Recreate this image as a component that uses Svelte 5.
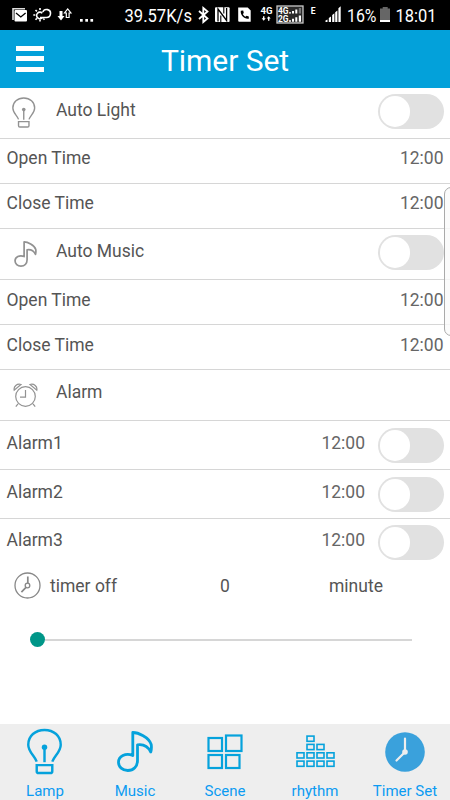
<script>
  const sections = [
    { icon: 'lamp', title: 'Auto Light' },
    { icon: 'music', title: 'Auto Music' }
  ];
  const times = ['Open Time', 'Close Time'];
  const alarms = ['Alarm1', 'Alarm2', 'Alarm3'];
  const tabs = [
    { icon: 'lamp', label: 'Lamp' },
    { icon: 'music', label: 'Music' },
    { icon: 'scene', label: 'Scene' },
    { icon: 'rhythm', label: 'rhythm' },
    { icon: 'timer', label: 'Timer Set' }
  ];
  const bars = [
    [10, 0], [10, 8.3], [20, 8.3],
    [0, 16.7], [10, 16.7], [20, 16.7], [30, 16.7],
    [0, 25], [10, 25], [20, 25], [30, 25]
  ];
</script>

{#snippet lamp(w, h, sw)}
  <svg width={w} height={h} viewBox="0 0 36 47" fill="none" stroke="currentColor" stroke-width={sw}>
    <path d="M10 34C8 28 1.3 24 1.3 16.5C1.3 7.5 8.5 1.3 18 1.3S34.7 7.5 34.7 16.5C34.7 24 28 28 26 34" />
    <path d="M10 37.5h16v6.2a2 2 0 0 1-2 2H12a2 2 0 0 1-2-2z" />
    <path d="M18 19v15.5" />
    <circle cx="18" cy="19" r="2.8" fill="currentColor" stroke="none" />
  </svg>
{/snippet}

{#snippet music(w, h, sw)}
  <svg width={w} height={h} viewBox="0 0 36 41" fill="none" stroke="currentColor" stroke-width={sw} stroke-linejoin="round">
    <path d="M15.8 24.5V1.5C21 1.5 32 6 34.2 13.5Q34.8 17 33.8 21Q29.5 12.5 20.5 13.8V29.5C20.5 35.5 16.5 39.5 10.8 39.5C5.5 39.5 1.5 36 1.5 31.3C1.5 25.8 8.5 21.2 15.8 24.5Z" />
  </svg>
{/snippet}

{#snippet toggle()}
  <span class="switch"><i></i></span>
{/snippet}

<div class="screen">
  <svg class="status" width="450" height="30" viewBox="0 0 450 30" fill="#fff">
    <path d="M13 20V8.7h12" fill="none" stroke="#ddd" stroke-width="1.6" />
    <rect x="14.5" y="10" width="12.5" height="11.5" rx="1" />
    <path d="M16 13l4.8 4 4.8-4" fill="none" stroke="#000" stroke-width="1.3" />
    <g fill="none" stroke="#fff" stroke-width="1.6">
      <path d="M40 17.5h6.5a4 4 0 1 0-3.7-5.5" />
      <path d="M42.5 17.5a3.3 3.3 0 1 1-.2-4.3" />
      <path d="M40 8v2M35.5 10l1.4 1.4M33.3 15h2M35.5 19.8l1.4-1.4M40 19.5v2M43.3 18.5l1.2 1.2" />
    </g>
    <path d="M59.5 11h3v5h2l-3.5 4.5-3.5-4.5h2z" />
    <path d="M66.3 17.5V13H64.5l3.2-4 3.2 4h-1.8v4.5z" fill="none" stroke="#fff" stroke-width="1.2" />
    <rect x="80" y="19" width="2.7" height="2.7" /><rect x="85.3" y="19" width="2.7" height="2.7" /><rect x="90.4" y="19" width="2.7" height="2.7" />
    <text x="124.5" y="21.7" font-size="18.5" textLength="67.5" lengthAdjust="spacingAndGlyphs">39.57K/s</text>
    <path d="M199 11l8.5 7.5-4.2 3.5V8l4.2 3.5L199 19" fill="none" stroke="#fff" stroke-width="1.8" />
    <rect x="215" y="7.3" width="14.6" height="14.7" rx="1" />
    <path d="M218 21.5V9l8.6 11.5V8" fill="none" stroke="#000" stroke-width="1.3" />
    <path d="M220.8 22v-6.5M223.8 7v6.5" fill="none" stroke="#000" stroke-width="1.1" />
    <path d="M238.2 7.5h9.5l3 3v11.3h-11.5a1 1 0 0 1-1-1z" />
    <path d="M240.8 10.8c-.8 4 3.7 8.8 8 7.9v-2.3l-2.3-.7-1 1c-1.3-.6-2.2-1.6-2.7-2.8l1-1-.6-2.4z" fill="#000" />
    <text x="260.5" y="14" font-size="9" font-weight="700" textLength="12" lengthAdjust="spacingAndGlyphs">4G</text>
    <path d="M263 16.2h1.4v2.1h1.3l-2 2.4-2-2.4h1.3zM268 20.7h1.4v-2.1h1.3l-2-2.4-2 2.4h1.3z" />
    <rect x="277" y="6" width="26" height="17" fill="#2a2a2a" stroke="#c8c8c8" stroke-width="1.3" />
    <text x="278" y="13.7" font-size="8.5" font-weight="700" textLength="10.5" lengthAdjust="spacingAndGlyphs">4G</text>
    <text x="278" y="22.2" font-size="8.5" font-weight="700" textLength="10.5" lengthAdjust="spacingAndGlyphs">2G</text>
    <path d="M289 13.6v-1.3h2v1.3zM292 13.6v-2.5h2v2.5zM295.3 13.6V9.5h2v4.1zM289 21.8v-1.6h2v1.6zM292 21.8v-3h2v3zM295.3 21.8v-4.6h2v4.6zM298.8 21.8v-6.2h2.2v6.2z" />
    <path d="M298.8 13.6V8h2.2v5.6z" fill="#777" />
    <text x="310.8" y="13.7" font-size="8.5" font-weight="700">E</text>
    <path d="M325.5 22v-1.5l2-1V22zM328.8 22v-4l2.2-1.4V22zM332.2 22v-7l2.2-1.8V22zM335.2 22v-9.7l2.2-1.8V22zM338.4 22V8.2l2.3-2V22z" />
    <text x="347" y="21.7" font-size="18.5" textLength="29.5" lengthAdjust="spacingAndGlyphs">16%</text>
    <path d="M380 8.5h2.7V7h5v1.5h2.3V20h-10z" fill="#666" />
    <rect x="380" y="20" width="10" height="2" />
    <text x="395.5" y="21.7" font-size="18.5" textLength="41" lengthAdjust="spacingAndGlyphs">18:01</text>
  </svg>

  <header>
    <div class="menu"><i></i><i></i><i></i></div>
    <h1>Timer Set</h1>
  </header>

  <main>
    {#each sections as s}
      <div class="row head">
        <span class="ico {s.icon}">
          {#if s.icon === 'lamp'}{@render lamp(23.5, 31, 2.1)}{:else}{@render music(23, 26, 2.7)}{/if}
        </span>
        <span class="name">{s.title}</span>
        {@render toggle()}
      </div>
      {#each times as t}
        <div class="row time {s.icon}"><span class="name">{t}</span><span class="val">12:00</span></div>
      {/each}
    {/each}
    <div class="row head">
      <span class="ico alarm">
        <svg width="25" height="25" viewBox="0 0 25 25" fill="none" stroke="currentColor" stroke-width="1.2">
          <circle cx="12.5" cy="13.5" r="9.8" />
          <path d="M12.5 7v7.2H7M1.2 7.2C.4 3.5 4 .3 8 1.5zM23.8 7.2c.8-3.7-2.8-6.9-6.8-5.7zM5 20.8l-2.2 2.8M20 20.8l2.2 2.8" />
        </svg>
      </span>
      <span class="name">Alarm</span>
    </div>
    {#each alarms as a}
      <div class="row wake"><span class="name">{a}</span><span class="val">12:00</span>{@render toggle()}</div>
    {/each}

    <div class="off">
      <svg width="27" height="27" viewBox="0 0 27 27" fill="none" stroke="currentColor" stroke-width="1.3">
        <circle cx="13.5" cy="13.5" r="12.5" />
        <circle cx="13.5" cy="13.5" r="2.3" />
        <path d="M13.8 11.2V4.5M12 15.3l-4.6 4.8" stroke-width="1.7" />
      </svg>
      <span class="lbl">timer off</span>
      <span class="num">0</span>
      <span class="unit">minute</span>
    </div>
    <div class="slider"><i></i><b></b></div>
  </main>

  <nav>
    {#each tabs as t}
      <div class="tab">
        <div class="pic {t.icon}">
          {#if t.icon === 'lamp'}
            {@render lamp(35, 47, 2.5)}
          {:else if t.icon === 'music'}
            {@render music(36, 41, 2.8)}
          {:else if t.icon === 'scene'}
            <svg width="36" height="36" viewBox="0 0 36 36" fill="none" stroke="currentColor" stroke-width="2.2">
              <rect x="1.5" y="4" width="13.5" height="13" /><rect x="19" y="1.5" width="15.5" height="15.5" />
              <rect x="1.5" y="21" width="13.5" height="13" /><rect x="19" y="21" width="13.5" height="13" />
            </svg>
          {:else if t.icon === 'rhythm'}
            <svg width="39" height="33" viewBox="0 0 39 33" fill="none" stroke="currentColor" stroke-width="1.6">
              {#each bars as [x, y]}
                <rect x={x + 1} y={y + 1.1} width="7" height="5.2" />
              {/each}
            </svg>
          {:else}
            <svg width="40" height="40" viewBox="0 0 40 40">
              <circle cx="20" cy="20" r="19.8" fill="#3aa1dc" />
              <path d="M20 6.5V20L11.5 28.5" fill="none" stroke="#eee" stroke-width="2.2" stroke-linecap="round" />
              <circle cx="20" cy="20" r="2.8" fill="#eee" />
            </svg>
          {/if}
        </div>
        <span>{t.label}</span>
      </div>
    {/each}
  </nav>
  <div class="edge"></div>
</div>

<style>
  :global(body) { margin: 0; background: #fff; }
  .screen {
    position: relative;
    display: flex;
    flex-direction: column;
    width: 450px;
    height: 800px;
    overflow: hidden;
    background: #fff;
    color: #555;
    font: 17.5px/20px Roboto, sans-serif;
  }
  svg { display: block; flex: none; }
  .status { background: #000; font-family: Roboto, sans-serif; }
  header {
    display: flex;
    height: 58px;
    background: #03a1da;
    color: #fff;
  }
  .menu {
    display: flex;
    flex-direction: column;
    gap: 5.3px;
    width: 28px;
    padding: 16px 0 0 16px;
  }
  .menu i { height: 5px; background: #fff; }
  h1 {
    flex: 1;
    margin: 0 44px 0 -44px;
    padding-left: 44px;
    font-size: 30px;
    line-height: 61px;
    font-weight: 400;
    letter-spacing: -0.05px;
    text-align: center;
  }
  main { flex: 1; }
  .row {
    display: flex;
    align-items: flex-start;
    box-sizing: border-box;
    border-bottom: 1px solid #d6d6d6;
    padding: 0 6.5px;
  }
  .name { flex: 1; }
  .head { height: 51px; }
  .head .name { padding-top: 12px; }
  .ico { width: 49.5px; color: #929292; }
  .ico svg { margin: 9px 0 0 5.7px; }
  .ico.music svg { margin: 12px 0 0 7px; }
  .ico.alarm svg { margin: 13px 0 0 6.5px; }
  .time { height: 45px; padding-top: 9px; }
  .time.music { padding-top: 10px; }
  .val { color: #666; }
  .wake { height: 49px; padding-top: 12px; }
  .wake .val { margin-right: 12.5px; }
  .wake .switch { margin-top: -5px; }
  .wake:nth-last-child(3) { border-bottom: 0; height: 48px; padding-top: 11px; }
  .switch {
    box-sizing: border-box;
    width: 66px;
    height: 35px;
    margin-top: 6px;
    padding: 2.4px;
    border-radius: 18px;
    background: #e1e1e1;
  }
  .switch i {
    display: block;
    width: 30.2px;
    height: 30.2px;
    border-radius: 50%;
    background: #fff;
  }
  .off { display: flex; align-items: flex-start; padding: 5px 0 0 14px; height: 27px; }
  .off svg { color: #888; }
  .off span { padding-top: 4px; }
  .lbl { width: 170px; margin-left: 9px; }
  .num { width: 109px; }
  .slider {
    display: flex;
    align-items: center;
    margin: 33px 38px 0 30px;
    height: 15px;
  }
  .slider i { width: 15px; height: 15px; border-radius: 50%; background: #009688; }
  .slider b { flex: 1; height: 2px; background: #d6d6d6; }
  nav { display: flex; height: 76px; background: #eee; color: #05a2dc; }
  .tab { flex: 1; display: flex; flex-direction: column; align-items: center; }
  .pic { flex: none; height: 57px; }
  .pic svg { margin-top: 4px; }
  .pic.lamp svg, .pic.music svg { margin-right: 1px; }
  .pic.music svg { margin-top: 7px; }
  .pic.scene svg { margin-top: 10px; }
  .pic.rhythm svg { margin: 11px 0 0 1px; }
  .pic.timer svg { margin-top: 8px; }
  .tab span { font-size: 15px; line-height: 20px; color: #0b9bf2; white-space: nowrap; }
  .edge {
    position: absolute;
    left: 444px;
    top: 187px;
    width: 12px;
    height: 147px;
    border: 1px solid #aaa;
    border-radius: 7px;
    background: rgba(250, 250, 250, 0.8);
  }
</style>
